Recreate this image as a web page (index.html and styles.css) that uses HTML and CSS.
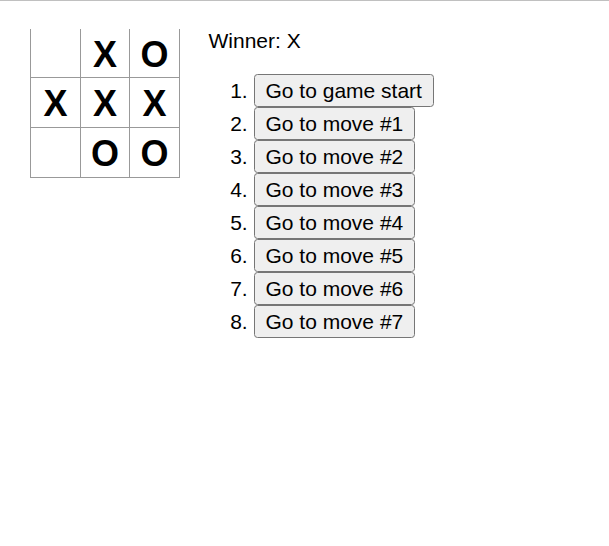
FILE: index.html
```html
<!DOCTYPE html>
<html>
<head>
<meta charset="utf-8">
<link rel="stylesheet" href="styles.css">
</head>
<body>
<div class="game">
  <div class="game-board">
    <div class="board-row">
      <button class="square"></button>
      <button class="square">X</button>
      <button class="square">O</button>
    </div>
    <div class="board-row">
      <button class="square">X</button>
      <button class="square">X</button>
      <button class="square">X</button>
    </div>
    <div class="board-row">
      <button class="square"></button>
      <button class="square">O</button>
      <button class="square">O</button>
    </div>
  </div>
  <div class="game-info">
    <div class="status">Winner: X</div>
    <ol class="moves">
      <li><button class="move">Go to game start</button></li>
      <li><button class="move">Go to move #1</button></li>
      <li><button class="move">Go to move #2</button></li>
      <li><button class="move">Go to move #3</button></li>
      <li><button class="move">Go to move #4</button></li>
      <li><button class="move">Go to move #5</button></li>
      <li><button class="move">Go to move #6</button></li>
      <li><button class="move">Go to move #7</button></li>
    </ol>
  </div>
</div>
</body>
</html>
```

FILE: styles.css
```css
html {
  border-top: 1px solid #c0c0c0;
  background: #fff;
}

body {
  zoom: 1.5;
  font: 14px "Liberation Sans", Arial, sans-serif;
  margin: 18.85px 20px 20px 20px;
  color: #000;
}

ol, ul {
  padding-left: 30px;
}

.board-row:after {
  clear: both;
  content: "";
  display: table;
}

.status {
  margin-bottom: 10px;
}

.square {
  background: #fff;
  border: 1px solid #999;
  float: left;
  font-family: "Liberation Sans", Arial, sans-serif;
  font-size: 24px;
  font-weight: bold;
  line-height: 34px;
  height: 34px;
  margin-right: -1px;
  margin-top: -1px;
  padding: 0;
  text-align: center;
  width: 34px;
  color: #000;
}

.square:focus {
  outline: none;
}

.game {
  display: flex;
  flex-direction: row;
}

.game-info {
  margin-left: 20px;
}

.move {
  font-family: "Liberation Sans", Arial, sans-serif;
  font-size: 14px;
  color: #000;
}
```
